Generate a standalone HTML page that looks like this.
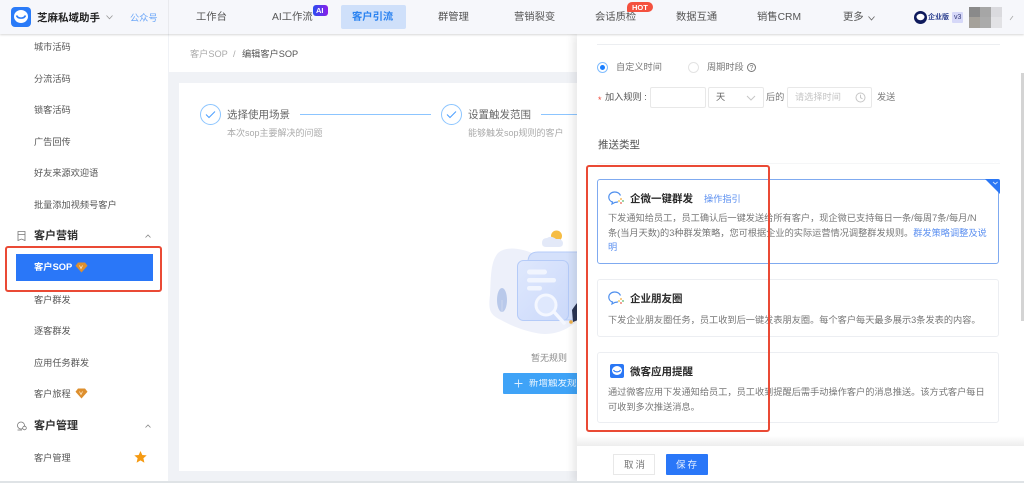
<!DOCTYPE html>
<html lang="zh"><head><meta charset="utf-8"><title>客户SOP</title>
<style>
html,body{margin:0;padding:0;width:1024px;height:483px;overflow:hidden;background:#fff}
body{position:relative;font-family:"Liberation Sans","Noto Sans CJK SC",sans-serif;color:#666}
.a{position:absolute;white-space:nowrap;line-height:1}
.s{font-size:9.2px;color:#555}
.n{font-size:9.2px;color:#555}
.h{font-size:11px;font-weight:700;color:#333}
.d{font-size:9.2px;color:#777;line-height:14.5px}
.card{position:absolute;left:597px;width:402px;box-sizing:border-box;border:1px solid #eceef2;border-radius:3px;background:#fff}
.t{font-size:10.5px;font-weight:700;color:#2b2b2b}
.m{font-size:10.3px;color:#555}
.b{position:absolute;box-sizing:border-box}
</style></head><body>

<!-- main bg -->
<div class="b" style="left:168px;top:72px;width:856px;height:411px;background:#f0f2f6"></div>
<div class="b" style="left:179px;top:83px;width:400px;height:388px;background:#fff"></div>
<div class="a" style="left:190px;top:50px;font-size:9.2px;color:#aaa">客户SOP</div>
<div class="a" style="left:233px;top:50px;font-size:9.2px;color:#aaa">/</div>
<div class="a" style="left:242px;top:50px;font-size:9.2px;color:#555">编辑客户SOP</div>

<!-- steps -->
<div class="b" style="left:200px;top:104px;width:21px;height:21px;border:1px solid #8cc5ff;border-radius:50%"></div>
<svg class="b" style="left:205px;top:110px" width="11" height="9" viewBox="0 0 11 9"><path d="M1 4.500L4 7.500L10 1.500" fill="none" stroke="#4a9eff" stroke-width="1"/></svg>
<div class="a" style="left:227px;top:110px;font-size:10.5px;color:#666">选择使用场景</div>
<div class="b" style="left:300px;top:114px;width:131px;height:1px;background:#8cc5ff"></div>
<div class="a" style="left:227px;top:129px;font-size:9px;color:#aaa">本次sop主要解决的问题</div>
<div class="b" style="left:441px;top:104px;width:21px;height:21px;border:1px solid #8cc5ff;border-radius:50%"></div>
<svg class="b" style="left:446px;top:110px" width="11" height="9" viewBox="0 0 11 9"><path d="M1 4.500L4 7.500L10 1.500" fill="none" stroke="#4a9eff" stroke-width="1"/></svg>
<div class="a" style="left:468px;top:110px;font-size:10.5px;color:#666">设置触发范围</div>
<div class="b" style="left:541px;top:114px;width:40px;height:1px;background:#8cc5ff"></div>
<div class="a" style="left:468px;top:129px;font-size:9px;color:#aaa">能够触发sop规则的客户</div>

<!-- empty illustration -->
<svg class="b" style="left:470px;top:220px" width="110" height="120" viewBox="0 0 110 120">
<defs><linearGradient id="g" x1="0" y1="0" x2="1" y2="1"><stop offset="0" stop-color="#dfe8fd"/><stop offset="1" stop-color="#cbd9fa"/></linearGradient></defs>
<path d="M28 33C36 26 50 28 62 33C78 37 100 40 108 60V100C96 112 80 116 66 113C52 110 42 106 31 100C20 95 18 90 20 75C21 60 20 42 28 33Z" fill="#edf0fa"/>
<path d="M58 42Q58 32 68 32H110V100H58Z" fill="#d5e1fb" stroke="#b5cbf8"/>
<rect x="47.500" y="40.500" width="51" height="60" rx="6" fill="url(#g)" stroke="#b5cbf8"/>
<rect x="57" y="49.500" width="20" height="5" rx="2.500" fill="#f1f5fe"/>
<rect x="57" y="58" width="29" height="4.500" rx="2.200" fill="#f1f5fe"/>
<rect x="57" y="66" width="15" height="4.500" rx="2.200" fill="#f1f5fe"/>
<circle cx="76" cy="85" r="10" fill="#dfe8fd" stroke="#f4f7ff" stroke-width="3"/>
<path d="M85 93L94 103" stroke="#f4f7ff" stroke-width="3.500" stroke-linecap="round"/>
<path d="M102 90Q106 84 108 82V100L103 102Z" fill="#2b3554"/>
<circle cx="101" cy="102" r="1.800" fill="#f0b24a"/>
<ellipse cx="32" cy="80" rx="5" ry="12" fill="#b9c9ea"/>
<path d="M32 80V92" stroke="#cdd7ee"/>
<circle cx="86.500" cy="16" r="5.500" fill="#f6bd45"/>
<path d="M72 23Q72 18 77 18Q81 15 86 19H90Q93 21 93 23Q93 27 89 27H76Q72 27 72 23Z" fill="#e3e9f8"/>
</svg>
<div class="a" style="left:531px;top:353.500px;font-size:9px;color:#888">暂无规则</div>
<div class="b" style="left:503px;top:373px;width:77px;height:21px;background:#3fa3f7;border-radius:1px"></div>
<svg class="b" style="left:514px;top:379px" width="9" height="9" viewBox="0 0 9 9"><path d="M4.500 .5V8.500M.5 4.500H8.500" stroke="#dff0ff" stroke-width=".9"/></svg>
<div class="a" style="left:529px;top:379px;width:48px;overflow:hidden;font-size:9.500px;color:#e8f4ff">新增触发规则</div>

<!-- right panel -->
<div class="b" style="left:577px;top:34px;width:447px;height:449px;background:#fff;box-shadow:-4px 0 8px rgba(0,0,0,.09)"></div>
<div class="b" style="left:597px;top:44px;width:403px;height:1px;background:#eceef1"></div>
<div class="b" style="left:1021px;top:73px;width:3px;height:248px;background:#d4d4d4"></div>

<div class="b" style="left:597px;top:62px;width:11px;height:11px;border:1px solid #80bdff;border-radius:50%"></div>
<div class="b" style="left:600px;top:65px;width:5px;height:5px;background:#1a7fff;border-radius:50%"></div>
<div class="a s" style="left:616px;top:63px;color:#777">自定义时间</div>
<div class="b" style="left:688px;top:62px;width:11px;height:11px;border:1px solid #e3e3e3;border-radius:50%"></div>
<div class="a s" style="left:707px;top:63px;color:#777">周期时段</div>
<div class="b" style="left:747px;top:63px;width:9px;height:9px;border:1px solid #777;border-radius:50%"></div>
<div class="a" style="left:749.500px;top:65px;font-size:7px;color:#777">?</div>

<div class="a" style="left:598px;top:96px;font-size:9px;color:#ef4a3c">*</div>
<div class="a s" style="left:605px;top:93px;color:#555">加入规则 :</div>
<div class="b" style="left:650px;top:87px;width:56px;height:21px;border:1px solid #e8e8e8;border-radius:2px"></div>
<div class="b" style="left:708px;top:87px;width:56px;height:21px;border:1px solid #e8e8e8;border-radius:2px"></div>
<div class="a s" style="left:716px;top:93px;color:#666">天</div>
<svg class="b" style="left:746px;top:95px" width="10" height="6" viewBox="0 0 10 6"><path d="M1 1L5 5L9 1" fill="none" stroke="#c6c6c6"/></svg>
<div class="a s" style="left:766px;top:93px;color:#777">后的</div>
<div class="b" style="left:787px;top:87px;width:85px;height:21px;border:1px solid #e8e8e8;border-radius:2px"></div>
<div class="a s" style="left:795px;top:93px;color:#c4c4c4">请选择时间</div>
<svg class="b" style="left:855px;top:92px" width="11" height="11" viewBox="0 0 11 11"><circle cx="5.500" cy="5.500" r="4.500" fill="none" stroke="#c6c6c6"/><path d="M5.500 2.800V5.700L7.500 6.800" fill="none" stroke="#c6c6c6"/></svg>
<div class="a s" style="left:877px;top:93px;color:#777">发送</div>
<div class="a" style="left:598px;top:140px;font-size:10.500px;color:#555">推送类型</div>
<div class="b" style="left:597px;top:163px;width:403px;height:1px;background:#f5f6f7"></div>

<!-- card 1 -->
<div class="card" style="top:179px;height:85px;border-color:#7faaf0"></div>
<svg class="b" style="left:985px;top:179px" width="15" height="15" viewBox="0 0 15 15"><path d="M0 0H13Q15 0 15 2V15Z" fill="#2a77f5"/><path d="M8 3L10.300 5L12.600 3" fill="none" stroke="#cfe2ff" stroke-width=".9"/></svg>
<svg class="b" style="left:608px;top:191px" width="18" height="15" viewBox="0 0 18 15"><path d="M12.500 4.500C11.500 2.300 9.200 1 6.700 1C3.500 1 .8 3.200 .8 6.200C.8 8.600 2.500 10.400 4.500 11L4 13L7 11.400C8 11.400 9 11.200 10 10.800" fill="none" stroke="#4e8fee" stroke-width="1.200"/><circle cx="13" cy="8" r=".9" fill="#f0a93a"/><circle cx="15" cy="10" r=".9" fill="#58b96a"/><circle cx="13" cy="12" r=".9" fill="#e8604c"/><circle cx="11" cy="10" r=".9" fill="#f0c03a"/></svg>
<div class="a t" style="left:630px;top:194px">企微一键群发</div>
<div class="a" style="left:704px;top:194.500px;font-size:9.200px;color:#5b8ff0">操作指引</div>
<div class="a d" style="left:608px;top:211px">下发通知给员工，员工确认后一键发送给所有客户，现企微已支持每日一条/每周7条/每月/N<br>条(当月天数)的3种群发策略，您可根据企业的实际运营情况调整群发规则。<span style="color:#5b8ff0">群发策略调整及说</span><br><span style="color:#5b8ff0">明</span></div>

<!-- card 2 -->
<div class="card" style="top:279px;height:58px"></div>
<svg class="b" style="left:608px;top:291px" width="18" height="15" viewBox="0 0 18 15"><path d="M12.500 4.500C11.500 2.300 9.200 1 6.700 1C3.500 1 .8 3.200 .8 6.200C.8 8.600 2.500 10.400 4.500 11L4 13L7 11.400C8 11.400 9 11.200 10 10.800" fill="none" stroke="#4e8fee" stroke-width="1.200"/><circle cx="13" cy="8" r=".9" fill="#f0a93a"/><circle cx="15" cy="10" r=".9" fill="#58b96a"/><circle cx="13" cy="12" r=".9" fill="#e8604c"/><circle cx="11" cy="10" r=".9" fill="#f0c03a"/></svg>
<div class="a t" style="left:630px;top:294px">企业朋友圈</div>
<div class="a d" style="left:608px;top:312.500px">下发企业朋友圈任务，员工收到后一键发表朋友圈。每个客户每天最多展示3条发表的内容。</div>

<!-- card 3 -->
<div class="card" style="top:352px;height:71px"></div>
<svg class="b" style="left:610px;top:364px" width="14" height="14" viewBox="0 0 14 14"><rect width="14" height="14" rx="2" fill="#2a77f5"/><ellipse cx="7" cy="6.500" rx="5" ry="4.500" fill="#fff"/><path d="M3.500 6C5 8.500 9 8.500 10.500 6" fill="none" stroke="#2a77f5" stroke-width="1.200"/></svg>
<div class="a t" style="left:630px;top:367px">微客应用提醒</div>
<div class="a d" style="left:608px;top:385px">通过微客应用下发通知给员工，员工收到提醒后需手动操作客户的消息推送。该方式客户每日<br>可收到多次推送消息。</div>

<!-- footer -->
<div class="b" style="left:577px;top:436px;width:447px;height:10px;background:linear-gradient(#fff,#ededed)"></div>
<div class="b" style="left:577px;top:446px;width:447px;height:37px;background:#fff"></div>
<div class="b" style="left:613px;top:454px;width:42px;height:21px;border:1px solid #e8e8e8;background:#fff"></div>
<div class="a" style="left:624px;top:461px;font-size:9.500px;letter-spacing:2px;color:#777">取消</div>
<div class="b" style="left:666px;top:454px;width:42px;height:21px;background:#2a77f8;border-radius:1px"></div>
<div class="a" style="left:676px;top:461px;font-size:9.500px;letter-spacing:2px;color:#e4efff">保存</div>

<!-- sidebar -->
<div class="b" style="left:0;top:34px;width:168px;height:449px;background:#fff"></div>
<div class="a n" style="left:34px;top:43px">城市活码</div>
<div class="a n" style="left:34px;top:75px">分流活码</div>
<div class="a n" style="left:34px;top:106px">锁客活码</div>
<div class="a n" style="left:34px;top:138px">广告回传</div>
<div class="a n" style="left:34px;top:169px">好友来源欢迎语</div>
<div class="a n" style="left:34px;top:201px">批量添加视频号客户</div>
<svg class="b" style="left:17px;top:231px" width="9" height="10" viewBox="0 0 9 10"><path d="M1 .5H8V9.500L4.500 8L1 9.500ZM1 3.500H8" fill="none" stroke="#777" stroke-width=".8"/></svg>
<div class="a h" style="left:34px;top:231px">客户营销</div>
<svg class="b" style="left:145px;top:234px" width="6" height="4" viewBox="0 0 6 4"><path d="M.5 3.500L3 1L5.500 3.500" fill="none" stroke="#888" stroke-width=".8"/></svg>
<div class="b" style="left:16px;top:254px;width:137px;height:27px;background:#2a77f8"></div>
<div class="a" style="left:34px;top:263px;font-size:9.300px;font-weight:700;color:#fff">客户SOP</div>
<svg class="b" style="left:75px;top:262px" width="13" height="11" viewBox="0 0 13 11"><path d="M3 .5H10L12.500 3.800L6.500 10.500L.5 3.800Z" fill="#dd8f2e"/><path d="M4.500 3.500L6 6.500L7.500 3.500" fill="none" stroke="#ffe9c8" stroke-width=".8"/></svg>
<div class="a n" style="left:34px;top:296px">客户群发</div>
<div class="a n" style="left:34px;top:327px">逐客群发</div>
<div class="a n" style="left:34px;top:358.500px">应用任务群发</div>
<div class="a n" style="left:34px;top:390px">客户旅程</div>
<svg class="b" style="left:75px;top:388px" width="13" height="11" viewBox="0 0 13 11"><path d="M3 .5H10L12.500 3.800L6.500 10.500L.5 3.800Z" fill="#dd8f2e"/><path d="M4.500 3.500L6 6.500L7.500 3.500" fill="none" stroke="#ffe9c8" stroke-width=".8"/></svg>
<svg class="b" style="left:16px;top:421px" width="11" height="10" viewBox="0 0 11 10"><circle cx="5" cy="4.500" r="3.500" fill="none" stroke="#777" stroke-width=".8"/><path d="M1.500 9H6" stroke="#777" stroke-width=".8"/><circle cx="8.500" cy="7" r="1.800" fill="#fff" stroke="#777" stroke-width=".8"/></svg>
<div class="a h" style="left:34px;top:421px">客户管理</div>
<svg class="b" style="left:145px;top:424px" width="6" height="4" viewBox="0 0 6 4"><path d="M.5 3.500L3 1L5.500 3.500" fill="none" stroke="#888" stroke-width=".8"/></svg>
<div class="a n" style="left:34px;top:453.500px">客户管理</div>
<svg class="b" style="left:134px;top:451px" width="13" height="12" viewBox="0 0 13 12"><path d="M6.500 0L8.300 4L12.700 4.400L9.400 7.300L10.400 11.700L6.500 9.400L2.600 11.700L3.600 7.300L.3 4.400L4.700 4Z" fill="#f59a12"/></svg>
<div class="b" style="left:168px;top:34px;width:1px;height:449px;background:#f0f2f6"></div>
<div class="b" style="left:0;top:481px;width:1024px;height:2px;background:#dfe3e6"></div>

<!-- header -->
<div class="b" style="left:0;top:0;width:1024px;height:34px;background:#f6f7fb;box-shadow:0 1px 2px rgba(0,0,0,.16)"></div>
<div class="b" style="left:168px;top:0;width:1px;height:34px;background:#e9eaee"></div>
<svg class="b" style="left:11px;top:7px" width="20" height="20" viewBox="0 0 20 20"><rect width="20" height="20" rx="4" fill="#2a7bf8"/><ellipse cx="10" cy="9.500" rx="7" ry="6.500" fill="#fff"/><path d="M5.500 8.500C7 12 13 12 14.500 8.500" fill="none" stroke="#2a7bf8" stroke-width="1.600"/></svg>
<div class="a" style="left:37px;top:12.500px;font-size:10.500px;font-weight:700;color:#222">芝麻私域助手</div>
<svg class="b" style="left:106px;top:15px" width="7" height="5" viewBox="0 0 7 5"><path d="M.5 .5L3.500 3.800L6.500 .5" fill="none" stroke="#999" stroke-width=".8"/></svg>
<div class="a" style="left:130px;top:13.500px;font-size:9.200px;color:#6aa6f8">公众号</div>
<div class="a m" style="left:196px;top:13px">工作台</div>
<div class="a m" style="left:272px;top:13px">AI工作流</div>
<div class="b" style="left:313px;top:5px;width:15px;height:11px;border-radius:3px;background:linear-gradient(90deg,#2a4df0,#8a1fe8)"></div>
<div class="a" style="left:316px;top:7px;font-size:7.500px;font-weight:700;color:#fff">AI</div>
<div class="b" style="left:341px;top:5px;width:65px;height:24px;background:#cfe0fa;border-radius:2px"></div>
<div class="a m" style="left:352px;top:13px;font-weight:700;color:#2a82f0">客户引流</div>
<div class="a m" style="left:438px;top:13px">群管理</div>
<div class="a m" style="left:514px;top:13px">营销裂变</div>
<div class="a m" style="left:595px;top:13px">会话质检</div>
<div class="b" style="left:627px;top:2px;width:26px;height:10px;border-radius:5px 5px 5px 1px;background:#f4513f"></div>
<div class="a" style="left:632px;top:3.500px;font-size:7.500px;font-weight:700;color:#fff">HOT</div>
<div class="a m" style="left:676px;top:13px">数据互通</div>
<div class="a m" style="left:757px;top:13px">销售CRM</div>
<div class="a m" style="left:843px;top:13px">更多</div>
<svg class="b" style="left:868px;top:16px" width="7" height="5" viewBox="0 0 7 5"><path d="M.5 .5L3.500 4L6.500 .5" fill="none" stroke="#666" stroke-width=".8"/></svg>
<svg class="b" style="left:914px;top:11px" width="13" height="13" viewBox="0 0 13 13"><circle cx="6.500" cy="6.500" r="6.500" fill="#0e1a5c"/><ellipse cx="6.500" cy="6" rx="4" ry="3.200" fill="#fff"/></svg>
<div class="a" style="left:928px;top:14px;font-size:7px;font-weight:700;color:#2b3f8f">企业版</div>
<div class="b" style="left:952px;top:12px;width:11px;height:11px;background:#d6d8f8;border-radius:1px"></div>
<div class="a" style="left:954px;top:14px;font-size:7px;color:#33397a">v3</div>
<div class="b" style="left:969px;top:7px;width:11px;height:10px;background:#8a8a8a"></div>
<div class="b" style="left:980px;top:7px;width:11px;height:10px;background:#a6a6a6"></div>
<div class="b" style="left:991px;top:7px;width:11px;height:10px;background:#dadade"></div>
<div class="b" style="left:969px;top:17px;width:11px;height:11px;background:#a5a19a"></div>
<div class="b" style="left:980px;top:17px;width:11px;height:11px;background:#ababab"></div>
<div class="b" style="left:991px;top:17px;width:11px;height:11px;background:#e2e2e5"></div>
<svg class="b" style="left:1009px;top:15px" width="5" height="6" viewBox="0 0 5 6"><path d="M1 5L4 1" fill="none" stroke="#aaa" stroke-width=".8"/></svg>

<!-- red annotations -->
<div class="b" style="left:5px;top:246px;width:157px;height:46px;border:2px solid #ea4a35;border-radius:3px"></div>
<div class="b" style="left:586px;top:165px;width:184px;height:267px;border:2px solid #ea4a35;border-radius:3px"></div>
</body></html>
